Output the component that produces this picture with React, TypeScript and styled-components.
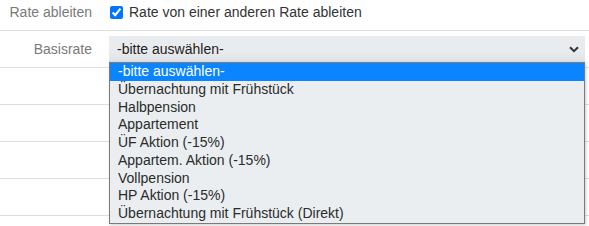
import React from "react";
import styled, { createGlobalStyle } from "styled-components";

const GlobalStyle = createGlobalStyle`
  html, body {
    margin: 0;
    padding: 0;
    height: 100%;
    overflow: hidden;
  }
  body {
    background: #fff;
    font-family: "Liberation Sans", Arial, sans-serif;
    font-size: 14px;
    color: #333;
  }
`;

const Form = styled.div`
  width: 589px;
  height: 100vh;
  overflow: hidden;
`;

const Row = styled.div<{ $height: number; $padBottom?: number }>`
  display: grid;
  grid-template-columns: 92px 1fr;
  column-gap: 17px;
  align-items: center;
  box-sizing: border-box;
  height: ${(p) => p.$height}px;
  padding: 0 4px ${(p) => p.$padBottom || 0}px 0;
  border-bottom: 1px solid #dedede;
`;

const Label = styled.div`
  text-align: right;
  color: #7a7a7a;
  white-space: nowrap;
`;

const CheckLabel = styled.label`
  display: flex;
  align-items: center;
  gap: 6px;
  color: #333;
`;

const Check = styled.input`
  width: 13px;
  height: 13px;
  margin: 0 0 0 1px;
  accent-color: #0075ff;
`;

const SelectWrap = styled.div`
  position: relative;
`;

const SelectBox = styled.div`
  height: 26px;
  display: flex;
  align-items: center;
  justify-content: space-between;
  padding: 0 6px 0 8px;
  box-sizing: border-box;
  background: linear-gradient(#e9ecee 0%, #e9ecee 60%, #dfe2e4 100%);
  color: #222;
`;

const List = styled.div`
  position: absolute;
  top: 26px;
  left: 0;
  right: 0;
  background: #eaeef0;
  border: 1px solid #7a7a7a;
  box-shadow: 1px 1px 3px rgba(0, 0, 0, 0.2);
  z-index: 2;
`;

const Option = styled.div<{ $active?: boolean }>`
  height: 17.75px;
  line-height: 17.75px;
  padding-left: 8px;
  white-space: nowrap;
  background: ${(p) => (p.$active ? "#0a85ff" : "transparent")};
  color: ${(p) => (p.$active ? "#fff" : "#2b2b2b")};
`;

const options = [
  "-bitte auswählen-",
  "Übernachtung mit Frühstück",
  "Halbpension",
  "Appartement",
  "ÜF Aktion (-15%)",
  "Appartem. Aktion (-15%)",
  "Vollpension",
  "HP Aktion (-15%)",
  "Übernachtung mit Frühstück (Direkt)",
];

function Chevron() {
  return (
    <svg width="10" height="7" viewBox="0 0 10 7">
      <path d="M1 1.2 L5 5.2 L9 1.2" fill="none" stroke="#333" strokeWidth="2" />
    </svg>
  );
}

export default function App() {
  return (
    <>
      <GlobalStyle />
      <Form>
        <Row $height={31} $padBottom={6}>
          <Label>Rate ableiten</Label>
          <CheckLabel>
            <Check type="checkbox" defaultChecked />
            Rate von einer anderen Rate ableiten
          </CheckLabel>
        </Row>
        <Row $height={37}>
          <Label>Basisrate</Label>
          <SelectWrap>
            <SelectBox>
              <span>-bitte auswählen-</span>
              <Chevron />
            </SelectBox>
            <List>
              {options.map((o, i) => (
                <Option key={o} $active={i === 0}>
                  {o}
                </Option>
              ))}
            </List>
          </SelectWrap>
        </Row>
        {[0, 1, 2, 3, 4].map((i) => (
          <Row key={i} $height={37} />
        ))}
      </Form>
    </>
  );
}
